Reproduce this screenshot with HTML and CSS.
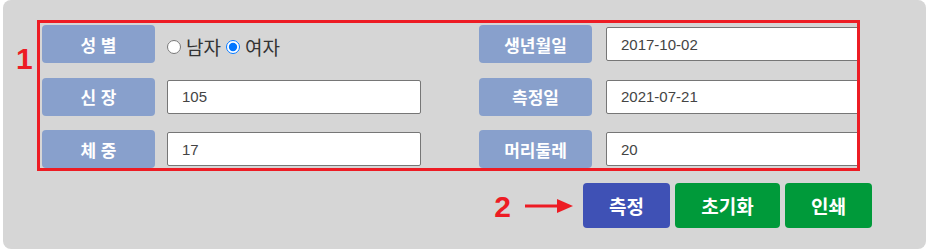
FILE: index.html
```html
<!DOCTYPE html>
<html lang="ko">
<head>
<meta charset="utf-8">
<title>측정</title>
<link rel="stylesheet" href="styles.css">
</head>
<body>
<div class="panel">
  <div class="form">
    <div class="label">성 별</div>
    <div class="radios">
      <input type="radio" name="sex" id="m"><label for="m">남자</label>
      <input type="radio" name="sex" id="f" checked><label for="f">여자</label>
    </div>
    <div class="label">생년월일</div>
    <input class="field" type="text" value="2017-10-02">

    <div class="label">신 장</div>
    <input class="field" type="text" value="105">
    <div class="label">측정일</div>
    <input class="field" type="text" value="2021-07-21">

    <div class="label">체 중</div>
    <input class="field" type="text" value="17">
    <div class="label">머리둘레</div>
    <input class="field" type="text" value="20">
  </div>
  <div class="actions">
    <span class="mark">2</span>
    <svg class="arrow" width="48" height="16" viewBox="0 0 48 16"><line x1="0" y1="8" x2="34" y2="8" stroke="#ed1c24" stroke-width="3"/><polygon points="32,1 48,8 32,15" fill="#ed1c24"/></svg>
    <button class="btn btn-blue btn-short">측정</button>
    <button class="btn btn-green btn-long">초기화</button>
    <button class="btn btn-green btn-short">인쇄</button>
  </div>
  <div class="redbox"></div>
  <span class="mark mark-one">1</span>
</div>
</body>
</html>
```
FILE: styles.css
```css
html, body {
  margin: 0;
  padding: 0;
  background: #ffffff;
}
.panel {
  position: relative;
  margin-left: 3px;
  width: 923px;
  height: 249px;
  box-sizing: border-box;
  padding: 25px 0 0 39px;
  background: #d6d6d6;
  border-radius: 8px;
  font-family: "Liberation Sans", "Noto Sans CJK KR", sans-serif;
}
.form {
  display: grid;
  grid-template-columns: 125px 312px 127px 254px;
  grid-auto-rows: 38px;
  row-gap: 14.5px;
  align-items: center;
}
.label {
  width: 113px;
  height: 38px;
  background: #88a0cc;
  border-radius: 4px;
  color: #ffffff;
  font-family: "Noto Sans CJK KR", sans-serif;
  font-weight: 700;
  font-size: 17px;
  display: flex;
  align-items: center;
  justify-content: center;
}
.field {
  width: 254px;
  height: 34px;
  box-sizing: border-box;
  margin: 0;
  border: 1px solid #767676;
  border-radius: 2px;
  padding: 0 14px;
  background: #ffffff;
  font-family: "Liberation Sans", sans-serif;
  font-size: 15px;
  color: #444444;
}
.radios {
  display: flex;
  align-items: center;
  padding-top: 5px;
  font-family: "Noto Sans CJK KR", sans-serif;
  font-size: 19px;
  color: #333333;
}
.radios input {
  margin: 0 5px 0 0;
  width: 14px;
  height: 14px;
}
.radios label {
  margin-right: 5px;
}
.actions {
  display: flex;
  align-items: center;
  justify-content: flex-end;
  margin-top: 15px;
  margin-right: 54px;
}
.mark {
  color: #ed1c24;
  font-family: "Liberation Sans", sans-serif;
  font-weight: 700;
  font-size: 30px;
  line-height: 34px;
}
.actions .mark {
  margin-right: 14px;
  margin-top: 3px;
}
.arrow {
  margin-right: 10px;
}
.btn {
  height: 45px;
  padding: 0;
  margin-left: 5px;
  border: none;
  border-radius: 4px;
  color: #ffffff;
  font-family: "Noto Sans CJK KR", sans-serif;
  font-weight: 700;
  font-size: 19px;
}
.btn-short {
  width: 87px;
}
.btn-long {
  width: 105px;
}
.actions .arrow + .btn {
  margin-left: 0;
}
.btn-blue {
  background: #3f51b5;
}
.btn-green {
  background: #009a3a;
}
.redbox {
  position: absolute;
  left: 34px;
  top: 20px;
  width: 823px;
  height: 151px;
  box-sizing: border-box;
  border: 3px solid #ed1c24;
  pointer-events: none;
}
.mark-one {
  position: absolute;
  left: 13px;
  top: 42px;
}
```
